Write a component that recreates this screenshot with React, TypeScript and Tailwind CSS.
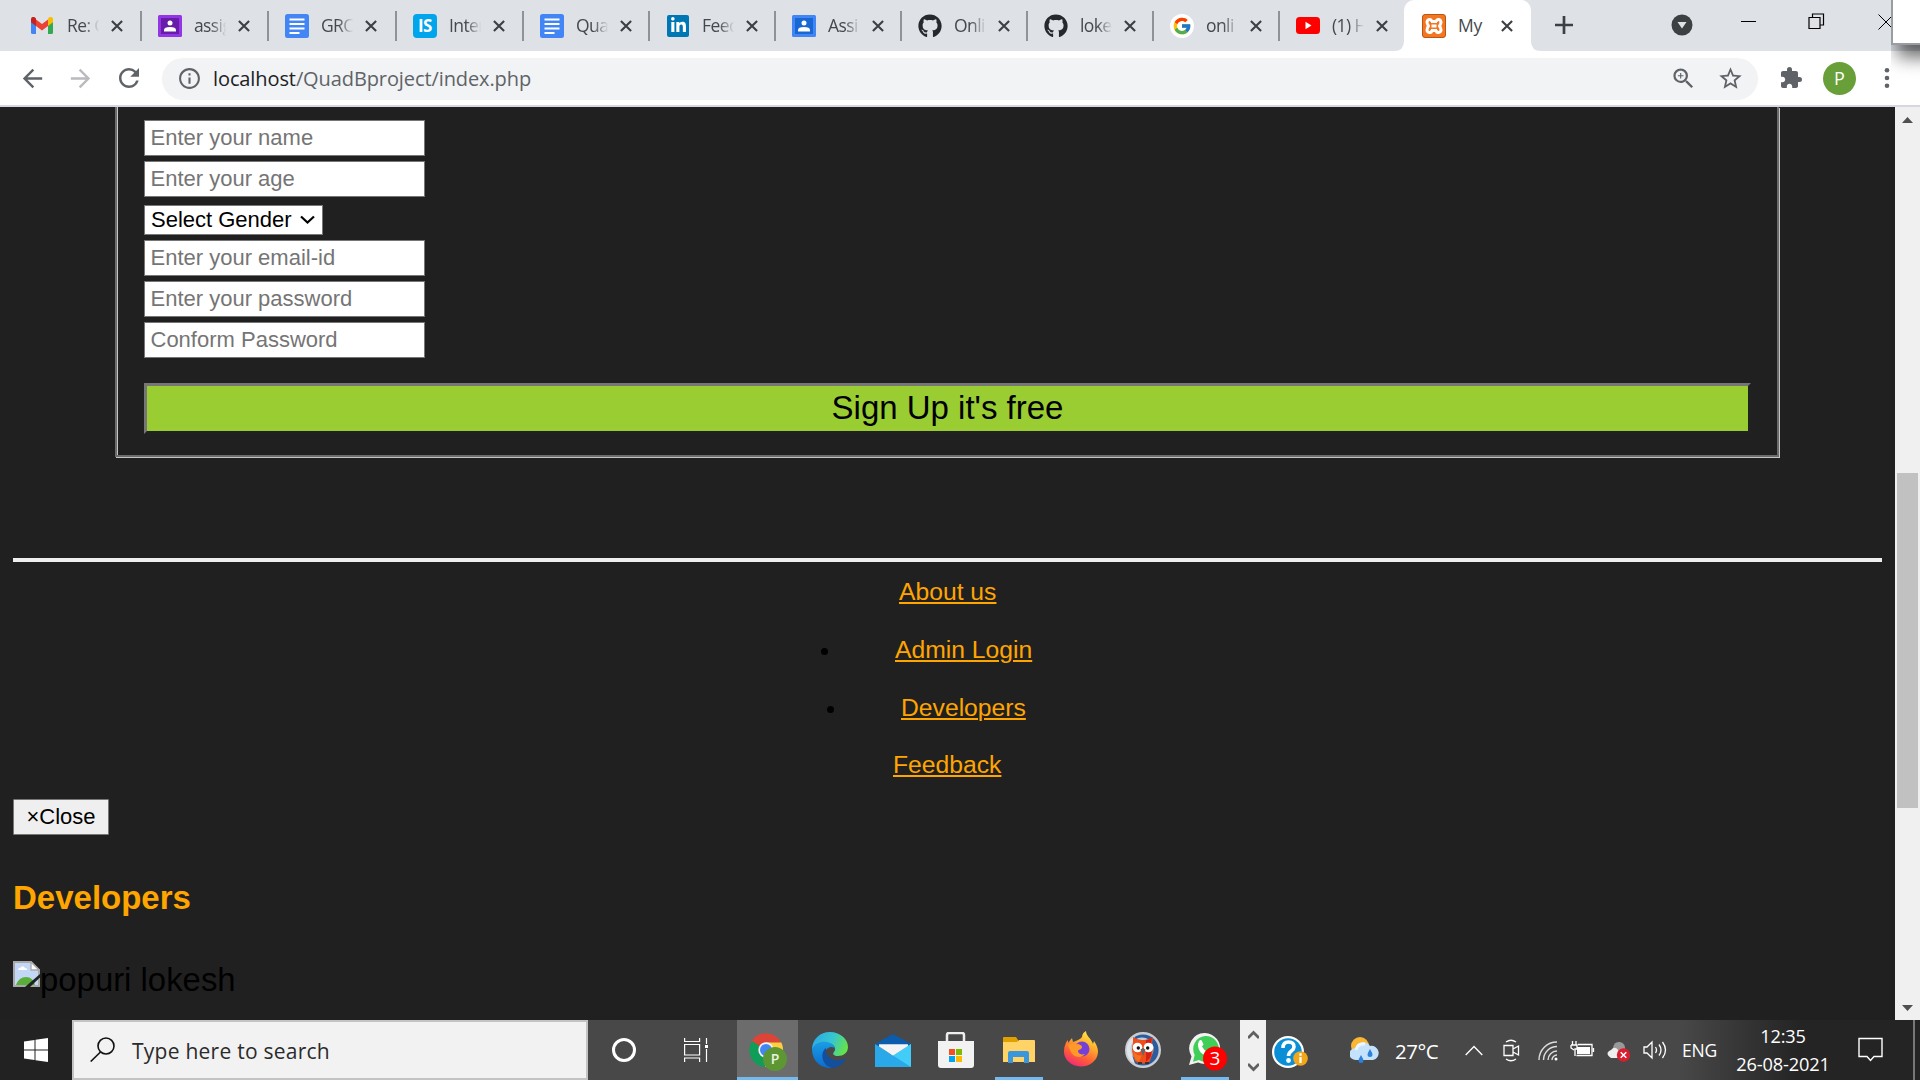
import React from "react";
import { FcGoogle } from "react-icons/fc";
import { FaGithub, FaLinkedinIn } from "react-icons/fa";
import { MdExtension, MdStarBorder, MdRefresh, MdZoomIn, MdInfoOutline, MdArrowBack, MdArrowForward } from "react-icons/md";

const Gmail = () => (
  <svg width="22" height="17" viewBox="0 0 22 17" className="mr-[2px]">
    <path d="M0 2v13.500q0 1.500 1.500 1.500H5V7z" fill="#4285f4" />
    <path d="M22 2v13.500q0 1.500-1.500 1.500H17V7z" fill="#34a853" />
    <path d="M5 2.500v6.500l6 4.500 6-4.500V2.500L11 7z" fill="#ea4335" />
    <path d="M0 2.200C0 0 2.500-.800 4 .500l1 1V9L0 5.300z" fill="#c5221f" />
    <path d="M22 2.200C22 0 19.500-.800 18 .500l-1 1V9l5-3.700z" fill="#fbbc04" />
  </svg>
);

const Classroom = ({ purple = false }: { purple?: boolean }) => (
  <svg width="24" height="22" viewBox="0 0 24 22">
    <rect width="24" height="22" rx="1.500" fill={purple ? "#9334e6" : "#4285f4"} />
    <rect x="3" y="3" width="18" height="16" fill={purple ? "#681da8" : "#1967d2"} />
    <circle cx="12" cy="8" r="2.500" fill="#fff" />
    <path d="M6 16.500v-1.500q0-3 6-3t6 3v1.500z" fill="#fff" />
  </svg>
);

const Docs = () => (
  <svg width="24" height="24" viewBox="0 0 24 24">
    <rect width="24" height="24" rx="2.500" fill="#4285f4" />
    <path d="M4.500 5.500h15M4.500 10h15M4.500 14.500h15M4.500 19h10" stroke="#fff" strokeWidth="2" />
  </svg>
);

const IS = () => (
  <span className="flex h-6 w-6 items-center justify-center rounded bg-[#00a5ec] font-['Open_Sans',sans-serif] text-[17px] leading-none font-bold text-white">IS</span>
);
const LinkedIn = () => (
  <span className="flex h-[22px] w-[22px] items-center justify-center rounded-[2px] bg-[#0077b5] text-white"><FaLinkedinIn size={17} /></span>
);
const Google = () => (
  <span className="flex h-6 w-6 items-center justify-center rounded-full bg-white"><FcGoogle size={20} /></span>
);
const YouTube = () => (
  <svg width="24" height="17" viewBox="0 0 24 17"><rect width="24" height="17" rx="3.500" fill="#f00" /><path d="M9.500 4.800v7.400l6-3.700z" fill="#fff" /></svg>
);
const Xampp = () => (
  <span className="flex h-6 w-6 items-center justify-center rounded-[3px] border border-[#b9560f] bg-[#f37623]">
    <svg width="20" height="18" viewBox="0 0 20 18" fill="none" stroke="#fff" strokeWidth="3" strokeLinejoin="round">
      <path d="M6.500 4.500H13.500M6.500 13.500H13.500M7.500 9H12.500M7.500 6V4.500Q7.500 2.500 5.500 2.500T3 5Q3 7 4.500 9 3 11 3 13T5.500 15.500 7.500 13.500V12M12.500 6V4.500Q12.500 2.500 14.500 2.500T17 5Q17 7 15.500 9 17 11 17 13T14.500 15.500 12.500 13.500V12" />
      <path d="M5.500 5.500h1.500M13 5.500h1.500M5.500 12.500h1.500M13 12.500h1.500" stroke="#f37623" strokeWidth="1.300" />
    </svg>
  </span>
);

const CloseX = () => (
  <svg width="12" height="12" viewBox="0 0 12 12" className="shrink-0"><path d="M.9.900l10.200 10.200M11.100.900L.9 11.100" stroke="#3c4043" strokeWidth="2.100" /></svg>
);

const tabs = [
  { icon: <Gmail />, text: "Re: G", w: "w-[127px]" },
  { icon: <Classroom purple />, text: "assig", w: "w-[127px]" },
  { icon: <Docs />, text: "GRO", w: "w-[128px]" },
  { icon: <IS />, text: "Inter", w: "w-[127px]" },
  { icon: <Docs />, text: "Qua", w: "w-[126px]" },
  { icon: <LinkedIn />, text: "Feed", w: "w-[126px]" },
  { icon: <Classroom />, text: "Assi", w: "w-[126px]" },
  { icon: <FaGithub size={24} color="#24292e" />, text: "Onli", w: "w-[126px]" },
  { icon: <FaGithub size={24} color="#24292e" />, text: "loke", w: "w-[126px]" },
  { icon: <Google />, text: "onli", w: "w-[126px]" },
  { icon: <YouTube />, text: "(1) H", w: "w-[124px]" },
];

const TabStrip = () => (
  <div className="relative flex h-[51px] bg-[#dee1e6] pl-[15px] text-[17.5px] tracking-[-0.6px] text-[#45494d]">
    {tabs.map((t, i) => (
      <div key={i} className={`flex shrink-0 items-center ${t.w}`}>
        <span className="ml-4 flex w-6 shrink-0 justify-center">{t.icon}</span>
        <span className="ml-3 w-[34px] overflow-hidden whitespace-nowrap [mask-image:linear-gradient(to_right,black_50%,transparent_95%)]">{t.text}</span>
        <span className="ml-[10px]"><CloseX /></span>
        {i < 10 && <span className="ml-auto h-[30px] w-[2px] shrink-0 bg-[#8f9297]" />}
      </div>
    ))}
    <div className="relative flex w-[127px] shrink-0 items-center rounded-t-[10px] bg-white">
      <svg className="absolute bottom-0 -left-[10px]" width="10" height="10"><path d="M10 0v10H0Q10 10 10 0" fill="#fff" /></svg>
      <svg className="absolute -right-[10px] bottom-0" width="10" height="10"><path d="M0 0v10h10Q0 10 0 0" fill="#fff" /></svg>
      <span className="ml-[18px]"><Xampp /></span>
      <span className="ml-3 w-[31px] tracking-[-0.3px]">My</span>
      <span className="ml-[12px]"><CloseX /></span>
    </div>
    <svg className="mt-4 ml-6 shrink-0" width="18" height="18"><path d="M9 0v18M0 9h18" stroke="#3c4043" strokeWidth="2.700" /></svg>
    <svg className="mt-[14px] ml-[98px] shrink-0" width="22" height="22"><circle cx="11" cy="11" r="10.500" fill="#3c4043" /><path d="M6.500 8h9L11 14.500z" fill="#dee1e6" /></svg>
    <svg className="mt-[14px] ml-[48px] shrink-0" width="16" height="16"><path d="M0 7.500h15" stroke="#000" /></svg>
    <svg className="mt-[13px] ml-[51px] shrink-0" width="17" height="17" fill="none" stroke="#000" strokeWidth="1.200"><path d="M1 4.500h11v11H1zM4.500 4V1H15.500v11H12.500" /></svg>
    <svg className="mt-[14px] ml-[53px] shrink-0" width="16" height="16"><path d="M.5.500l15 15M15.500.500l-15 15" stroke="#000" /></svg>
  </div>
);

const Toolbar = () => (
  <div className="flex h-[56px] items-center border-b-2 border-[#d6d8df] bg-white text-[#5f6368]">
    <MdArrowBack size={29} className="ml-[18px]" />
    <MdArrowForward size={29} color="#b9bbbe" className="ml-[19px]" />
    <MdRefresh size={30} className="ml-[19px]" />
    <div className="mt-[1px] ml-[18px] flex h-[42px] w-[1596px] shrink-0 items-center rounded-full bg-[#f1f3f4] pl-[15px]">
      <MdInfoOutline size={25} />
      <span className="ml-[11px] text-[20px] tracking-[-0.1px] whitespace-nowrap"><span className="text-[#202124]">localhost</span>/QuadBproject/index.php</span>
      <MdZoomIn size={27} className="ml-auto" />
      <MdStarBorder size={27} className="mr-[14px] ml-[20px]" />
    </div>
    <MdExtension size={24} className="ml-[21px]" />
    <span className="ml-[20px] flex h-[33px] w-[33px] items-center justify-center rounded-full bg-[#689f38] text-[18px] text-white">P</span>
    <svg className="ml-[28px]" width="6" height="20" fill="#5f6368"><circle cx="3" cy="2.300" r="2.300" /><circle cx="3" cy="10" r="2.300" /><circle cx="3" cy="17.700" r="2.300" /></svg>
  </div>
);

const Field = ({ label, className = "" }: { label: string; className?: string }) => (
  <input placeholder={label} className={`block h-9 w-[281px] border border-[#767676] bg-white px-[5.500px] text-[22px] text-black placeholder:text-[#757575] ${className}`} />
);

const BrokenImage = () => (
  <svg width="27" height="26" viewBox="0 0 27 26">
    <path d="M1 1h17l8 8v16H1z" fill="#c3d8f7" stroke="#a9a9a9" strokeWidth="2" />
    <path d="M5 9q0-2.500 3-2.500 2-2.500 4 .5 2.500 0 2 2z" fill="#fff" />
    <path d="M3 24q3-8 10-8t9 8z" fill="#5aae3a" />
    <path d="M18 1v8h8z" fill="#fff" stroke="#a9a9a9" strokeWidth="1.300" />
    <path d="M27 13v3.500L17 26h-5z" fill="#202020" />
  </svg>
);

const Link = ({ children }: { children: React.ReactNode }) => (
  <a className="whitespace-nowrap text-[#ffa500] underline decoration-2 underline-offset-[2px]">{children}</a>
);

const Page = () => (
  <main className="h-[913px] w-[1895px] overflow-hidden bg-[#202020] font-['Liberation_Sans',Arial,sans-serif] text-black">
    <div className="relative ml-[115px] h-[350px] w-[1664px] border-x-2 border-b-2 border-[#6c6c6c] pt-[13px] pl-[27px] shadow-[1px_1px_0_#c4c4c4]">
      <span className="absolute top-0 bottom-0 left-0 w-px bg-[#c4c4c4]" />
      <Field label="Enter your name" />
      <Field label="Enter your age" className="mt-[5px]" />
      <div className="mt-2 flex h-[30px] w-[179px] items-center border border-[#767676] bg-white pl-[6px] text-[22px]">
        <span className="-mt-[2px] whitespace-nowrap">Select Gender</span>
        <svg className="ml-[8px]" width="15" height="10" fill="none"><path d="M1 1.500l6.500 6 6.500-6" stroke="#000" strokeWidth="2.200" /></svg>
      </div>
      <Field label="Enter your email-id" className="mt-[5px]" />
      <Field label="Enter your password" className="mt-[5px]" />
      <Field label="Conform Password" className="mt-[5px]" />
      <button className="mt-[25px] flex h-[51px] w-[1607px] items-center justify-center border-[3px] border-t-[#767676] border-r-[#212121] border-b-[#212121] border-l-[#767676] bg-[#9acd32] text-[33px]"><span className="-mt-[2px]">Sign Up it's free</span></button>
    </div>
    <div className="mt-[101px] ml-[13px] h-1 w-[1869px] bg-[#eee]" />
    <nav className="pt-[16px] text-[24.700px] leading-[28px]">
      <div className="ml-[899px]"><Link>About us</Link></div>
      <div className="mt-[30px] ml-[821px] flex items-center"><span className="mt-[3px] mr-[67px] h-[7px] w-[7px] rounded-full bg-black" /><Link>Admin Login</Link></div>
      <div className="mt-[30px] ml-[827px] flex items-center"><span className="mt-[3px] mr-[67px] h-[7px] w-[7px] rounded-full bg-black" /><Link>Developers</Link></div>
      <div className="mt-[29px] ml-[893px]"><Link>Feedback</Link></div>
    </nav>
    <button className="mt-[20px] ml-[13px] flex h-9 w-24 items-center justify-center rounded-[1px] border border-[#767676] bg-[#efefef] text-[22px]"><span className="-mt-[2px]">×Close</span></button>
    <h2 className="mt-[43px] ml-[13px] text-[33px] leading-[40px] font-bold text-[#ffa500]">Developers</h2>
    <div className="mt-[43px] ml-[13px] flex items-start text-[32.900px] leading-[38px]"><BrokenImage /><span>popuri lokesh</span></div>
  </main>
);

const Scrollbar = () => (
  <aside className="flex w-[25px] flex-col items-center bg-[#f0f0f0]">
    <svg className="mt-[10px]" width="11" height="6"><path d="M0 6L5.500 0 11 6z" fill="#505050" /></svg>
    <div className="mt-[350px] h-[335px] w-[21px] bg-[#c1c1c1]" />
    <svg className="mt-auto mb-[9px]" width="11" height="6"><path d="M0 0l5.500 6L11 0z" fill="#505050" /></svg>
  </aside>
);

const ChromeIcon = () => (
  <svg width="38" height="38" viewBox="0 0 38 38">
    <path d="M17 17L2.300 8.500A17 17 0 0 1 32 9.500H17z" fill="#db4437" />
    <path d="M17 17L3 8A17 17 0 0 0 16 34l7-13z" fill="#0f9d58" />
    <path d="M17 9.500h15.300A17 17 0 0 1 16 34l8-14z" fill="#ffcd40" />
    <circle cx="17" cy="17" r="7.700" fill="#f1f1f1" /><circle cx="17" cy="17" r="6" fill="#4285f4" />
    <circle cx="26" cy="26" r="12" fill="#5d9733" />
    <text x="26" y="31" textAnchor="middle" fontSize="14" fontWeight="600" fill="#e9f3df" fontFamily="Open Sans">P</text>
  </svg>
);

const EdgeIcon = () => (
  <svg width="36" height="36" viewBox="0 0 36 36">
    <defs>
      <linearGradient id="edgeTop" x1="0" x2="1" y1=".2" y2=".5"><stop stopColor="#2ba8e8" /><stop offset=".55" stopColor="#36c6d0" /><stop offset="1" stopColor="#66e24a" /></linearGradient>
      <linearGradient id="edgeSide" x2="0" y2="1"><stop stopColor="#1b9de2" /><stop offset="1" stopColor="#0b6bd0" /></linearGradient>
    </defs>
    <path d="M0 18C0 7 8 0 18 0s18 7 18 15c0 6-5 9-10 9-4 0-6-2-4-4 3-4 0-8-6-9-7-1-13 2-16 7z" fill="url(#edgeTop)" />
    <path d="M0 17C3 11 9 9 15 10c5 1 8 4 8 7-1-3-8-3-10 3-3 8 1 14 8 16C9 37 0 29 0 17z" fill="url(#edgeSide)" />
    <path d="M14 16c-6 4-5 17 6 20 6-.500 11-4 13-8 1-1 0-2-1-1-8 4-18-1-18-8z" fill="#124f9e" />
  </svg>
);

const MailIcon = () => (
  <svg width="36" height="33" viewBox="0 0 36 33">
    <path d="M0 10L18 0l18 10v4H0z" fill="#0b5cad" /><path d="M4 10.500h29L18 22z" fill="#f4f4f4" />
    <path d="M0 10l18 11.500L36 10v23H0z" fill="#29a8ea" /><path d="M36 10v23L18 21.500z" fill="#42cdf8" />
    <path d="M4 10.500h29v1.500L18 21.500 4 12.500z" fill="#f4f4f4" />
  </svg>
);

const StoreIcon = () => (
  <svg width="36" height="36" viewBox="0 0 36 36">
    <path d="M9 15V3q0-2 2-2h13q2 0 2 2v8" fill="none" stroke="#eee" strokeWidth="2.500" />
    <path d="M0 9h36v24q0 3-3 3H3q-3 0-3-3z" fill="#f2f2f2" />
    <path d="M11 17h6v6h-6z" fill="#f25022" /><path d="M18 17h6v6h-6z" fill="#7fba00" /><path d="M11 24h6v6h-6z" fill="#00a4ef" /><path d="M18 24h6v6h-6z" fill="#ffb900" />
  </svg>
);

const FolderIcon = () => (
  <svg width="32" height="27" viewBox="0 0 32 27">
    <path d="M0 6V1q0-1 1-1h12l2 3v3z" fill="#e0a100" /><path d="M0 5h14l2-2h15q1 0 1 1v21H0z" fill="#ffd365" />
    <path d="M5 26V16q0-2 2-2h17q2 0 2 2v10h-5v-6H10v6z" fill="#3a96dd" />
  </svg>
);

const FirefoxIcon = () => (
  <svg width="34" height="36" viewBox="0 0 34 36">
    <defs>
      <linearGradient id="fox" x1=".8" y1="0" x2=".3" y2="1"><stop stopColor="#fff44f" /><stop offset=".35" stopColor="#ffb02e" /><stop offset=".7" stopColor="#ff6034" /><stop offset="1" stopColor="#f02878" /></linearGradient>
    </defs>
    <path d="M22 0c0 5 5 7 7 13l1-3c3 4 4 8 4 11a17 15 0 0 1-34-1c0-5 2-9 4-11v3l4-5 1 4c5-2 8-3 9-5 0-3 2-5 4-6z" fill="url(#fox)" />
    <circle cx="18" cy="18" r="7.500" fill="#7440d8" />
    <path d="M4 14c5-2 6 0 10-1 2 1 4 1 4 3 0 3-4 2-4 4 0 3 4 4 7 3-4 5-12 3-14-2z" fill="#ff9a2a" />
  </svg>
);

const OwlIcon = () => (
  <svg width="36" height="36" viewBox="0 0 36 36">
    <circle cx="18" cy="18" r="16.800" fill="#2a5c9e" stroke="#c9ccd1" strokeWidth="2.400" />
    <path d="M10 4A16 16 0 0 0 10 32Q4 18 10 4" fill="#dfe4ea" />
    <circle cx="17" cy="17" r="11.500" fill="#c3cddb" />
    <path d="M8 5q5 3.500 10 3 5 .500 10-3l-1 6q2 6 0 12l-2 6-3 2.500h-8l-4-2.500-2-6q-2-6 0-12z" fill="#ec4f1c" />
    <path d="M27 5l-1 7q2 7-1 14l-4 4V8q4 0 6-3" fill="#d32014" />
    <path d="M8 19q5 6 9 4l-3 7-4-3z" fill="#f4711f" />
    <circle cx="12.500" cy="15.500" r="4.800" fill="#fff" /><circle cx="23.500" cy="15.500" r="4.800" fill="#fff" />
    <circle cx="13.300" cy="16" r="1.700" fill="#111" /><circle cx="22.700" cy="16" r="1.700" fill="#111" />
    <path d="M15.500 17.500l2.500-1.500 2.500 1.500-2.500 6.500z" fill="#666" /><path d="M13 31h4M20 31h4" stroke="#222" strokeWidth="1.600" />
  </svg>
);

const WhatsAppIcon = () => (
  <svg width="38" height="38" viewBox="0 0 38 38">
    <path d="M16 0A15.500 15.500 0 1 1 9 29.500L0 32l2.500-8.500A15.500 15.500 0 0 1 16 0" fill="#f2f2f2" />
    <path d="M16 3A13 13 0 1 1 10 27l-6 1.700L5.700 22A13 13 0 0 1 16 3" fill="#3fcf58" />
    <path d="M10 8q2-2 3 0l1.500 3.500-1.500 2q2 4 6 6l2-2 4 2q1 4-4 4Q9 22 9 11z" fill="#fff" />
    <circle cx="26" cy="25.500" r="12" fill="#f00" />
    <text x="26" y="32" textAnchor="middle" fontSize="19" fill="#fff" fontFamily="Open Sans">3</text>
  </svg>
);

const HelpIcon = () => (
  <svg width="36" height="34" viewBox="0 0 36 34">
    <circle cx="16" cy="16" r="16" fill="#fff" /><circle cx="16" cy="16" r="13.800" fill="#0a8fd6" />
    <path d="M11 12q0-6 5.500-6t5.500 5c0 4-5.500 4-5.500 9" fill="none" stroke="#fff" strokeWidth="3.600" /><circle cx="16.500" cy="24.500" r="2.400" fill="#fff" />
    <circle cx="28.500" cy="22.500" r="7.300" fill="#f2a71b" /><path d="M28.500 21v6M28.500 17.300v2.400" stroke="#fff" strokeWidth="2.300" />
  </svg>
);

const Tray = () => (
  <>
    <svg className="ml-[42px] shrink-0" width="30" height="28" viewBox="0 0 30 28">
      <circle cx="10" cy="10" r="9" fill="#fbb733" />
      <path d="M6 24a6 6 0 0 1-1-12A8.500 8.500 0 0 1 20 10a7 7 0 1 1 3 14z" fill="#c4e2fb" /><path d="M6 14q2-7 9-6" stroke="#eaf5ff" strokeWidth="3" fill="none" />
      <path d="M20 13q-5 8 0 8t0-8M11 19q-5 8 0 8t0-8" fill="#2e80d8" />
    </svg>
    <span className="mt-[3px] ml-[15px] w-[70px] shrink-0 text-[20.500px] tracking-[-0.5px]">27°C</span>
    <svg className="shrink-0" width="18" height="11" fill="none"><path d="M.7 10L9 1.500l8.300 8.500" stroke="#fff" strokeWidth="1.400" /></svg>
    <svg className="ml-[20px] shrink-0" width="17" height="23" fill="none" stroke="#fff" strokeWidth="1.300"><path d="M1 6.500h9v10H1zM10 10l5.500-3v9L10 13M3 3q5-3.500 10 0M3 20q5 3.500 10 0" /></svg>
    <svg className="mt-[2px] ml-[18px] shrink-0" width="20" height="20" fill="none" stroke="#ddd" strokeWidth="1.400"><path d="M1 19A18 18 0 0 1 19 1M5.500 19A13.500 13.500 0 0 1 19 5.500M10 19a9 9 0 0 1 9-9M14 19a5 5 0 0 1 5-5" /><circle cx="18" cy="18" r="1.500" fill="#fff" stroke="none" /></svg>
    <svg className="-mt-[2px] ml-[12px] shrink-0" width="25" height="18" fill="none" stroke="#fff" strokeWidth="1.300"><path d="M1 5h6v4H5v7M2.500 5V1M6 5V1M1 5v3l3 2M8 4.500h14v11H6.500M23.500 8v4" /><path d="M7 7h13v7H7z" fill="#fff" stroke="none" /></svg>
    <svg className="mt-1 ml-[11px] shrink-0" width="25" height="22"><path d="M7 7Q8 0 14 1q6 1 5 9l-10 4z" fill="#999" /><path d="M5 17q-7-5 0-8 4-5 8 1l5 3v4z" fill="#eee" /><circle cx="17.500" cy="14" r="6.700" fill="#da1e2e" /><path d="M14.700 11.200l5.600 5.600M20.300 11.200l-5.600 5.600" stroke="#fff" strokeWidth="1.500" /></svg>
    <svg className="ml-[12px] shrink-0" width="24" height="20" fill="none" stroke="#fff" strokeWidth="1.300"><path d="M1 7h3l5-5v16l-5-5H1zM12.500 7q2 3 0 6M16 4.500q4 5.500 0 11M19.500 2q6 8 0 16" /></svg>
    <span className="ml-[15px] w-[54px] shrink-0 text-[17.500px] tracking-[-0.2px]">ENG</span>
    <div className="flex w-[94px] shrink-0 flex-col items-center text-[18.200px] leading-[28px] tracking-[-0.15px] whitespace-nowrap"><span>12:35</span><span>26-08-2021</span></div>
    <svg className="ml-[28px] shrink-0" width="25" height="26" fill="none"><path d="M1 1.500h23v18h-8l-3.500 4-3.500-4H1z" stroke="#fff" strokeWidth="1.400" /></svg>
    <span className="mr-[5px] ml-auto h-full w-[2px] bg-[#777]" />
  </>
);

const AppCell = ({ children, className = "" }: { children: React.ReactNode; className?: string }) => (
  <div className={`flex h-[60px] shrink-0 items-center justify-center border-[#76b9ed] ${className}`}>{children}</div>
);

const Taskbar = () => (
  <footer className="flex h-[60px] items-center bg-[linear-gradient(to_right,#484848_0,#484848_1680px,#242424_1800px)] text-white">
    <div className="flex h-full w-[72px] shrink-0 items-center justify-center bg-[#222]">
      <svg width="24" height="24" fill="#fff"><path d="M0 3.500L10.500 2v9.500H0zM11.500 1.800L24 0v11.500H11.500zM0 12.500h10.500V22L0 20.500zM11.500 12.500H24V24l-12.500-1.800z" /></svg>
    </div>
    <div className="flex h-full w-[516px] shrink-0 items-center border-2 border-[#c3c3c3] bg-[#f2f2f2] pl-[16px] text-[#2b2b2b]">
      <svg className="mb-[1px]" width="25" height="25" fill="none" stroke="#111" strokeWidth="1.600"><circle cx="16" cy="9" r="8" /><path d="M10.500 15L.7 24.500" /></svg>
      <span className="ml-[17px] pt-1 text-[21px] tracking-[0.25px] whitespace-nowrap">Type here to search</span>
    </div>
    <span className="ml-6 h-6 w-6 shrink-0 rounded-full border-[3px] border-white" />
    <svg className="mr-[28px] ml-[48px] shrink-0" width="25" height="24" fill="none" stroke="#fff" strokeWidth="1.200"><path d="M.6 0v3.500h15V0M.6 6.500h15v10.500H.6zM.6 24v-4h15v4M22.500 0v6M22.500 11v13" /><path d="M21 7h3v3h-3z" fill="#fff" stroke="none" /></svg>
    <AppCell className="w-[61px] border-b-[3px] bg-[#6c6c6c]"><span className="mt-[7px]"><ChromeIcon /></span></AppCell>
    <AppCell className="ml-[1px] w-[62px]"><EdgeIcon /></AppCell>
    <AppCell className="w-[64px]"><MailIcon /></AppCell>
    <AppCell className="w-[62px]"><StoreIcon /></AppCell>
    <AppCell className="ml-[8px] w-[48px] border-b-[3px]"><span className="mt-[4px]"><FolderIcon /></span></AppCell>
    <AppCell className="ml-[7px] w-[62px]"><span className="mb-[2px]"><FirefoxIcon /></span></AppCell>
    <AppCell className="w-[62px]"><OwlIcon /></AppCell>
    <AppCell className="ml-[7px] w-[48px] border-b-[3px]"><span className="mt-[7px] ml-[6px]"><WhatsAppIcon /></span></AppCell>
    <div className="ml-[11px] flex h-full w-[26px] shrink-0 flex-col items-center justify-between bg-[#f0f0f0] pt-[10px] pb-[8px]">
      <svg width="11" height="9" fill="none"><path d="M0 8l5.500-5.500L11 8" stroke="#606060" strokeWidth="2.700" /></svg>
      <svg width="11" height="9" fill="none"><path d="M0 1l5.500 5.500L11 1" stroke="#606060" strokeWidth="2.700" /></svg>
    </div>
    <span className="mt-[6px] ml-[6px] shrink-0"><HelpIcon /></span>
    <Tray />
  </footer>
);

export default function App() {
  return (
    <div className="relative flex h-[1080px] w-[1920px] flex-col overflow-hidden font-['Open_Sans','Noto_Sans',sans-serif]">
      <TabStrip />
      <Toolbar />
      <div className="flex h-[913px]"><Page /><Scrollbar /></div>
      <Taskbar />
      <div className="absolute top-0 left-[1891px] h-[45px] w-[40px] border-b-2 border-l-2 border-[#999da1] bg-white shadow-[10px_8px_18px_4px_rgba(0,0,0,0.6)] [clip-path:inset(0_0_-40px_0)]" />
    </div>
  );
}
